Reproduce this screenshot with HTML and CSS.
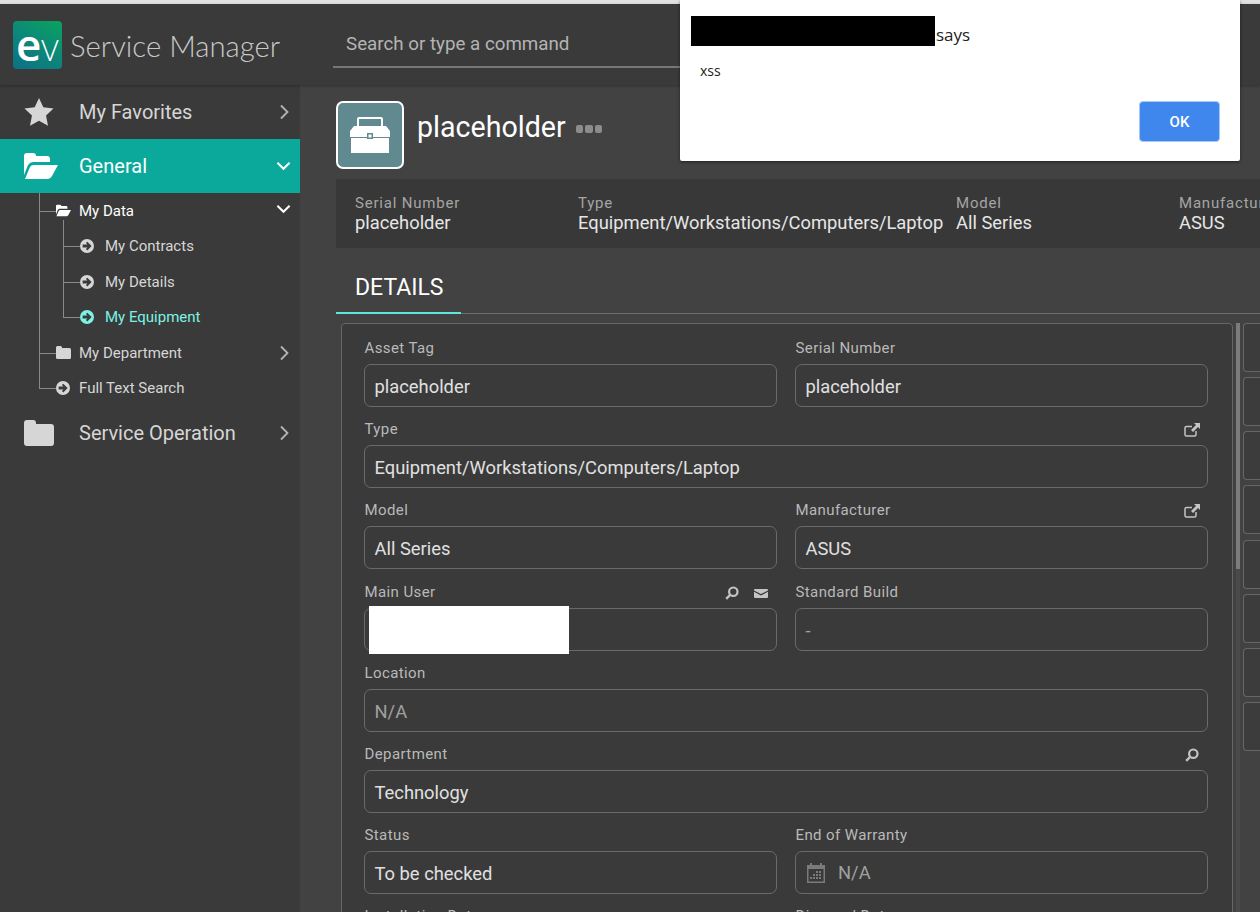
FILE: index.html
```html
<!DOCTYPE html>
<html lang="en">
<head>
  <meta charset="UTF-8" />
  <title>Service Manager</title>
  <link rel="stylesheet" href="styles.css">
</head>
<body>

  <svg class="icon-defs" aria-hidden="true">
    <symbol id="i-star" viewBox="0 0 32 32"><path d="M16 1l4.6 10 10.9 1.3-8 7.5 2.1 10.8L16 25.2 6.400 30.600l2.100-10.800-8-7.500L11.400 11z"/></symbol>
    <symbol id="i-folder-open" viewBox="0 0 34 26"><path d="M0 22V3q0-3 3-3h6q3 0 3 3h11q3 0 3 3v3H9q-3 0-5 3z"/><path d="M1 26L6 14q1-2 4-2h24l-6 11q-1.500 3-4 3z"/></symbol>
    <symbol id="i-folder" viewBox="0 0 30 26"><path d="M0 23V3q0-3 3-3h6q3 0 3 3v1h15q3 0 3 3v16q0 3-3 3H3q-3 0-3-3z"/></symbol>
    <symbol id="i-arrow" viewBox="0 0 16 16"><path fill-rule="evenodd" d="M8 0a8 8 0 1 1 0 16A8 8 0 0 1 8 0zM8.300 3L6.800 4.500 8.400 6.300H3v3.400h5.400L6.800 11.500 8.300 13 13.300 8z"/></symbol>
    <symbol id="i-right" viewBox="0 0 10 16"><path d="M2 1.500L8.500 8 2 14.500" fill="none" stroke="currentColor" stroke-width="1.800"/></symbol>
    <symbol id="i-down" viewBox="0 0 16 10"><path d="M1.500 1.500L8 8l6.500-6.500" fill="none" stroke="currentColor" stroke-width="2.200"/></symbol>
    <symbol id="i-external" viewBox="0 0 16 14"><path d="M12 8v3.500A1.500 1.500 0 0 1 10.500 13h-8A1.500 1.500 0 0 1 1 11.500V5A1.500 1.500 0 0 1 2.500 3.500H8" fill="none" stroke="currentColor" stroke-width="1.500"/><path d="M10 0h6v6l-2-2-5 5-2-2 5-5z"/></symbol>
    <symbol id="i-search" viewBox="0 0 14 14"><circle cx="8.300" cy="5.700" r="4.200" fill="none" stroke="currentColor" stroke-width="2.200"/><path d="M5 9L1.200 12.800" fill="none" stroke="currentColor" stroke-width="2.400"/></symbol>
    <symbol id="i-mail" viewBox="0 0 14 9"><path d="M0 1Q0 0 1 0h12q1 0 1 1v.4L7 5 0 1.400z"/><path d="M0 2.800L7 6.500l7-3.700V8q0 1-1 1H1Q0 9 0 8z"/></symbol>
    <symbol id="i-calendar" viewBox="0 0 18 20"><path fill-rule="evenodd" d="M0 2h3V0h2v2h8V0h2v2h3v18H0zM1.500 6v12.500h15V6zM9 8h2v2H9zm3 0h2v2h-2zM6 11h2v2H6zm3 0h2v2H9zm3 0h2v2h-2zM3 14h2v2H3zm3 0h2v2H6zm3 0h2v2H9zm3 0h2v2h-2z"/></symbol>
    <symbol id="i-toolbox" viewBox="0 0 40 36"><path d="M7 10V2q0-2 2-2h22q2 0 2 2v8h-2V2H9v8z"/><path d="M4 9h32l4 5v6H0v-6z"/><path d="M1 21h38v15H1z"/><path d="M17 16h6v6h-6z" fill="#618a90"/><path d="M18.500 17.500h3v3h-3z"/></symbol>
  </svg>

  <div class="top-strip"></div>

  <header class="app-header">
    <div class="brand">
      <div class="brand-logo"><span class="logo-e">e</span><span class="logo-v">V</span></div>
      <span class="brand-name">Service Manager</span>
    </div>
    <div class="search-box">Search or type a command</div>
  </header>

  <div class="app-body">
    <aside class="sidebar">
      <div class="nav-item">
        <svg class="nav-icon"><use href="#i-star"/></svg>
        <span class="nav-label">My Favorites</span>
        <svg class="chev-right"><use href="#i-right"/></svg>
      </div>
      <div class="nav-item active">
        <svg class="nav-icon wide-icon"><use href="#i-folder-open"/></svg>
        <span class="nav-label">General</span>
        <svg class="chev-down"><use href="#i-down"/></svg>
      </div>

      <div class="tree">
        <div class="tree-item open">
          <svg class="tree-icon"><use href="#i-folder-open"/></svg>
          <span>My Data</span>
          <svg class="chev-down"><use href="#i-down"/></svg>
        </div>
        <div class="subtree">
          <div class="tree-item">
            <svg class="tree-icon round"><use href="#i-arrow"/></svg>
            <span>My Contracts</span>
          </div>
          <div class="tree-item">
            <svg class="tree-icon round"><use href="#i-arrow"/></svg>
            <span>My Details</span>
          </div>
          <div class="tree-item current">
            <svg class="tree-icon round"><use href="#i-arrow"/></svg>
            <span>My Equipment</span>
          </div>
        </div>
        <div class="tree-item">
          <svg class="tree-icon"><use href="#i-folder"/></svg>
          <span>My Department</span>
          <svg class="chev-right"><use href="#i-right"/></svg>
        </div>
        <div class="tree-item">
          <svg class="tree-icon round"><use href="#i-arrow"/></svg>
          <span>Full Text Search</span>
        </div>
      </div>

      <div class="nav-item">
        <svg class="nav-icon"><use href="#i-folder"/></svg>
        <span class="nav-label">Service Operation</span>
        <svg class="chev-right"><use href="#i-right"/></svg>
      </div>
    </aside>

    <main class="main">
      <div class="record-head">
        <div class="record-icon"><svg><use href="#i-toolbox"/></svg></div>
        <h1>placeholder</h1>
        <div class="dots"><i></i><i></i><i></i></div>
      </div>

      <div class="summary">
        <div><span class="sum-label">Serial Number</span><span class="sum-value">placeholder</span></div>
        <div><span class="sum-label">Type</span><span class="sum-value">Equipment/Workstations/Computers/Laptop</span></div>
        <div><span class="sum-label">Model</span><span class="sum-value">All Series</span></div>
        <div><span class="sum-label">Manufacturer</span><span class="sum-value">ASUS</span></div>
      </div>

      <div class="tabs"><div class="tab">DETAILS</div></div>

      <div class="detail-row">
        <section class="panel">
          <div class="field">
            <div class="field-label"><span>Asset Tag</span></div>
            <div class="input">placeholder</div>
          </div>
          <div class="field">
            <div class="field-label"><span>Serial Number</span></div>
            <div class="input">placeholder</div>
          </div>
          <div class="field wide">
            <div class="field-label"><span>Type</span><svg class="act"><use href="#i-external"/></svg></div>
            <div class="input">Equipment/Workstations/Computers/Laptop</div>
          </div>
          <div class="field">
            <div class="field-label"><span>Model</span></div>
            <div class="input">All Series</div>
          </div>
          <div class="field">
            <div class="field-label"><span>Manufacturer</span><svg class="act"><use href="#i-external"/></svg></div>
            <div class="input">ASUS</div>
          </div>
          <div class="field">
            <div class="field-label"><span>Main User</span><svg class="act small"><use href="#i-search"/></svg><svg class="act mail"><use href="#i-mail"/></svg></div>
            <div class="input redacted"><div class="white-out"></div></div>
          </div>
          <div class="field">
            <div class="field-label"><span>Standard Build</span></div>
            <div class="input muted">-</div>
          </div>
          <div class="field wide">
            <div class="field-label"><span>Location</span></div>
            <div class="input muted">N/A</div>
          </div>
          <div class="field wide">
            <div class="field-label"><span>Department</span><svg class="act small"><use href="#i-search"/></svg></div>
            <div class="input">Technology</div>
          </div>
          <div class="field">
            <div class="field-label"><span>Status</span></div>
            <div class="input">To be checked</div>
          </div>
          <div class="field">
            <div class="field-label"><span>End of Warranty</span></div>
            <div class="input muted dated"><svg class="cal"><use href="#i-calendar"/></svg>N/A</div>
          </div>
          <div class="field">
            <div class="field-label"><span>Installation Date</span></div>
          </div>
          <div class="field">
            <div class="field-label"><span>Disposal Date</span></div>
          </div>
        </section>

        <div class="scroll-track"><div class="scroll-thumb"></div></div>

        <div class="side-cards">
          <div class="side-card"></div>
          <div class="side-card"></div>
          <div class="side-card"></div>
          <div class="side-card"></div>
          <div class="side-card"></div>
          <div class="side-card"></div>
          <div class="side-card"></div>
          <div class="side-card"></div>
        </div>
      </div>
    </main>
  </div>

  <!-- browser alert -->
  <div class="alert-box">
    <div class="alert-title"><div class="black-out"></div><span>says</span></div>
    <div class="alert-text">xss</div>
    <div class="alert-actions"><button type="button">OK</button></div>
  </div>

</body>
</html>
```

FILE: styles.css
```css
html, body {
  margin: 0;
  height: 912px;
  overflow: hidden;
}

body {
  position: relative;
  background-color: #424242;
  color: #ddd;
  font-family: Roboto, "Liberation Sans", sans-serif;
}

.icon-defs {
  display: none;
}

svg {
  fill: currentColor;
  flex: none;
}

.top-strip {
  height: 4px;
  background-color: #e1e1e4;
}

/* header */
.app-header {
  position: relative;
  z-index: 2;
  display: flex;
  height: 81px;
  background-color: #3a3a3a;
  box-shadow: 0 1px 3px rgba(0,0,0,0.25);
}

.brand {
  display: flex;
  align-items: center;
  width: 333px;
  padding-left: 13px;
  box-sizing: border-box;
}

.brand-logo {
  display: flex;
  align-items: baseline;
  width: 49px;
  height: 48px;
  padding-left: 3px;
  box-sizing: border-box;
  margin-top: 1px;
  border-radius: 4px;
  background: linear-gradient(30deg, #0d7085 0%, #0c8a78 55%, #0aa35c 100%);
  color: #fff;
}

.logo-e {
  font-family: "Open Sans", sans-serif;
  font-size: 44px;
  font-weight: 600;
  line-height: 46px;
}

.logo-v {
  font-family: "Open Sans", sans-serif;
  font-size: 30px;
  font-weight: 300;
  line-height: 30px;
}

.brand-name {
  margin-left: 8px;
  margin-top: 1px;
  font-family: Lato, sans-serif;
  font-size: 29.300px;
  font-weight: 300;
  color: #c9c9c9;
  white-space: nowrap;
}

.search-box {
  width: 780px;
  height: 64px;
  padding: 26px 0 0 13px;
  box-sizing: border-box;
  border-bottom: 2px solid #777;
  font-size: 18.750px;
  line-height: 28px;
  color: #b4b4b4;
}

.app-body {
  display: flex;
  height: 827px;
}

/* sidebar */
.sidebar {
  flex: none;
  width: 300px;
  background-color: #3a3a3a;
  color: #d6d6d6;
}

.nav-item {
  display: flex;
  align-items: center;
  height: 54px;
  font-size: 20px;
}

.nav-item.active {
  background-color: #0aa99b;
  color: #fff;
}

.nav-icon {
  width: 30px;
  height: 30px;
  margin-left: 24px;
  margin-right: 25px;
}

.nav-icon.wide-icon {
  width: 34px;
  margin-right: 21px;
}

.nav-label {
  flex: 1;
}

.chev-right {
  width: 10px;
  height: 16px;
  margin-right: 11px;
  color: #b5b5b5;
}

.chev-down {
  width: 15px;
  height: 10px;
  margin-right: 9px;
}

.tree {
  position: relative;
  margin-left: 39px;
  font-size: 15px;
}

/* vertical guide of the tree */
.tree::before {
  content: "";
  position: absolute;
  left: 0;
  top: 0;
  height: 195px;
  border-left: 1px solid #8a8a8a;
}

.tree-item {
  position: relative;
  display: flex;
  align-items: center;
  height: 35.500px;
  padding-left: 17px;
}

.tree-item::before {
  content: "";
  position: absolute;
  left: 0;
  top: 50%;
  width: 17px;
  border-top: 1px solid #8a8a8a;
}

.tree-item > span {
  flex: 1;
}

.tree-item .chev-down {
  margin-bottom: 3px;
}

.tree-item.open {
  color: #fff;
}

.tree-icon {
  width: 15px;
  height: 13px;
  margin-right: 8px;
}

.tree-icon.round {
  width: 14px;
  height: 14px;
  margin-right: 9px;
}

.subtree {
  position: relative;
  margin-left: 24px;
}

.subtree .tree-icon.round {
  margin-right: 11px;
}

.subtree::before {
  content: "";
  position: absolute;
  left: 0;
  top: -9px;
  height: 98px;
  border-left: 1px solid #8a8a8a;
}

.tree-item.current {
  color: #7cf2e4;
}

/* main */
.main {
  flex: 1;
  min-width: 0;
  padding-left: 36px;
  overflow: hidden;
}

.record-head {
  display: flex;
  align-items: flex-start;
  height: 94px;
  padding-top: 16px;
  box-sizing: border-box;
}

.record-icon {
  display: flex;
  align-items: center;
  justify-content: center;
  width: 68px;
  height: 68px;
  box-sizing: border-box;
  border: 2px solid #fff;
  border-radius: 7px;
  background-color: #618a90;
  color: #fff;
}

.record-icon svg {
  width: 40px;
  height: 36px;
}

.record-head h1 {
  margin: 7px 0 0 13px;
  font-size: 28.600px;
  font-weight: 400;
  line-height: 38px;
  color: #fff;
}

.dots {
  display: flex;
  gap: 2px;
  margin: 24px 0 0 10px;
}

.dots i {
  width: 7.500px;
  height: 7.500px;
  border-radius: 2px;
  background-color: #8c8c8c;
}

.summary {
  display: grid;
  grid-template-columns: 223px 378px 223px auto;
  height: 69px;
  padding: 15px 0 0 19px;
  box-sizing: border-box;
  background-color: #383838;
  white-space: nowrap;
}

.summary > div {
  min-width: 0;
}

.sum-label {
  display: block;
  font-size: 15px;
  line-height: 18px;
  letter-spacing: 0.800px;
  color: #a5a5a5;
}

.sum-value {
  display: block;
  font-size: 18.350px;
  line-height: 22px;
  color: #e6e6e6;
}

.tabs {
  height: 66px;
  box-sizing: border-box;
  border-bottom: 1px solid #6e6e6e;
}

.tab {
  width: 125px;
  height: 66px;
  box-sizing: border-box;
  padding: 24px 0 0 19px;
  border-bottom: 2px solid #5fe6da;
  font-size: 23px;
  line-height: 32px;
  color: #fff;
}

.detail-row {
  display: flex;
  margin-top: 9px;
}

.panel {
  flex: none;
  display: grid;
  grid-template-columns: 413px 413px;
  column-gap: 18px;
  align-content: start;
  width: 892px;
  height: 640px;
  margin-left: 5px;
  padding: 2px 23px 0 22px;
  box-sizing: border-box;
  border: 1px solid #666;
  border-radius: 4px;
  background-color: #3a3a3a;
}

.field.wide {
  grid-column: 1 / 3;
}

.field-label {
  display: flex;
  align-items: flex-end;
  height: 38.170px;
  padding: 0 0 6px 0.500px;
  box-sizing: border-box;
  font-size: 15px;
  line-height: 20px;
  letter-spacing: 0.400px;
  color: #b9b9b9;
}

.field-label > span {
  flex: 1;
}

.act {
  width: 16px;
  height: 14px;
  margin: 0 8px 2px 0;
  color: #c4c4c4;
}

.act.small {
  width: 14px;
  height: 14px;
  margin: 0 9px 2px 0;
}

.act.mail {
  width: 14px;
  height: 9px;
  margin: 0 9px 4px 6px;
}

.input {
  position: relative;
  height: 43px;
  padding: 0 9.500px;
  box-sizing: border-box;
  border: 1px solid #6a6a6a;
  border-radius: 7px;
  font-size: 18.350px;
  line-height: 44px;
  color: #e0e0e0;
}

.input.muted {
  color: #a0a0a0;
}

.input.dated {
  display: flex;
  align-items: center;
  padding-left: 11px;
}

.cal {
  width: 18px;
  height: 20px;
  margin-right: 13px;
  color: #7a7a7a;
}

.white-out {
  position: absolute;
  left: 4px;
  top: -3px;
  width: 200px;
  height: 48px;
  background-color: #fff;
}

.scroll-track {
  flex: none;
  width: 4px;
  height: 640px;
  margin-left: 3px;
  background-color: #4a4a4a;
}

.scroll-thumb {
  height: 246px;
  background-color: #7c7c7c;
}

.side-cards {
  flex: 1;
  display: flex;
  flex-direction: column;
  gap: 5.140px;
  margin-left: 3px;
}

.side-card {
  height: 49px;
  border: 1px solid #666;
  border-right: none;
  border-radius: 4px 0 0 4px;
  box-sizing: border-box;
  background-color: #3c3c3c;
}

/* alert */
.alert-box {
  position: absolute;
  z-index: 5;
  left: 680px;
  top: 0;
  width: 560px;
  height: 161px;
  box-sizing: border-box;
  padding: 16px 20px 0 11px;
  background-color: #fff;
  border-radius: 0 0 2px 2px;
  box-shadow: 0 1px 3px rgba(0,0,0,0.5);
  font-family: "Open Sans", sans-serif;
  color: #222;
}

.alert-title {
  display: flex;
  align-items: center;
  height: 30px;
  font-size: 17px;
}

.alert-title span {
  padding-top: 6px;
}

.black-out {
  width: 244px;
  height: 30px;
  margin-right: 1px;
  background-color: #000;
}

.alert-text {
  margin: 16px 0 0 9px;
  font-size: 14px;
  line-height: 18px;
}

.alert-actions {
  display: flex;
  justify-content: flex-end;
  margin-top: 21px;
}

.alert-actions button {
  width: 81px;
  height: 41px;
  border: 1px solid #a9c9f5;
  border-radius: 4px;
  background-color: #3f87ec;
  color: #fff;
  font-family: Roboto, sans-serif;
  font-size: 15px;
  font-weight: 500;
}
```
